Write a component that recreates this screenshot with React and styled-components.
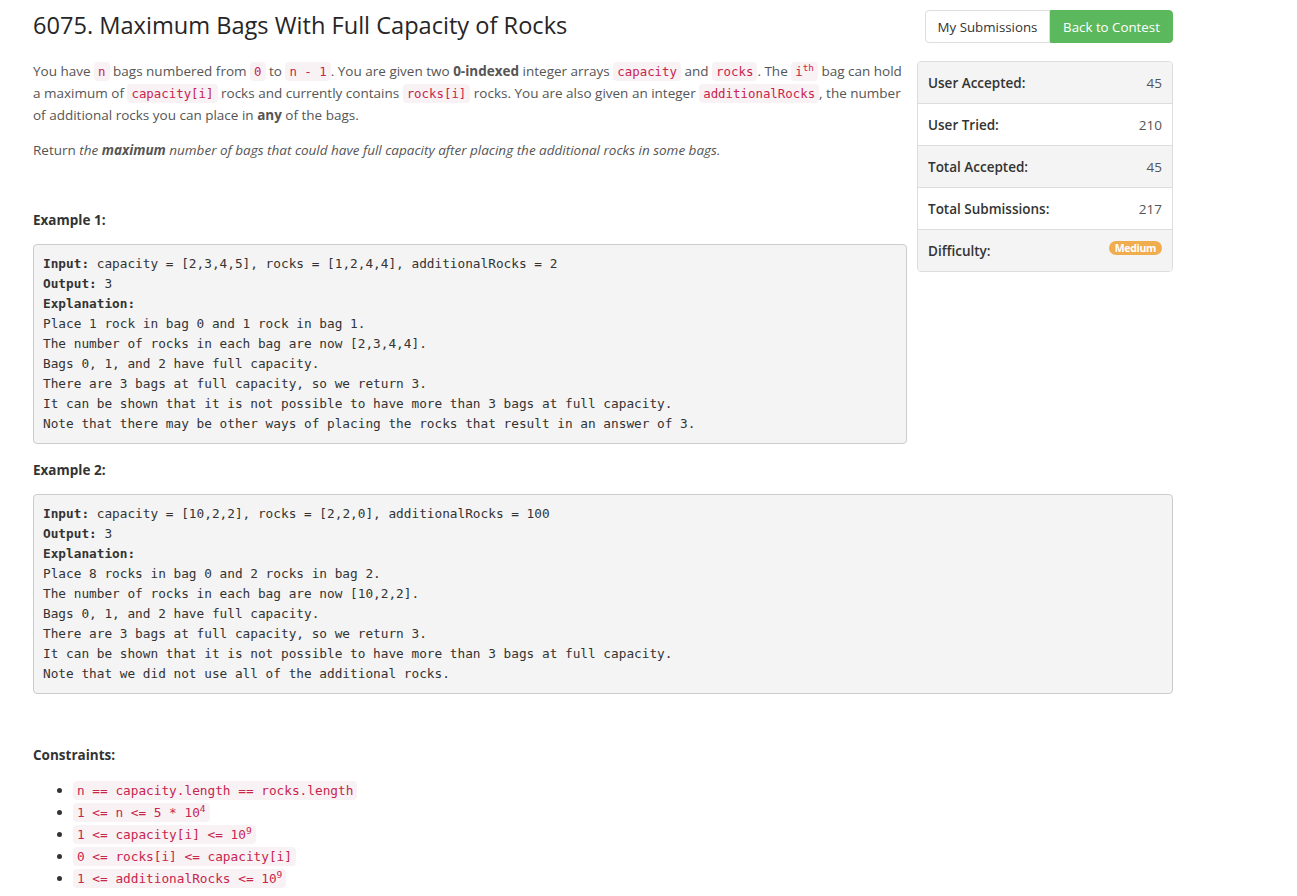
import React from "react";
import styled, { createGlobalStyle } from "styled-components";

const Global = createGlobalStyle`
  html, body { margin: 0; padding: 0; background: #fff; }
  body {
    font-family: "Open Sans", "Noto Sans", sans-serif;
    font-size: 13.5px;
    color: #555;
  }
  * { box-sizing: border-box; }
`;

const Page = styled.div`
  width: 1140px;
  margin-left: 33px;
`;

const Header = styled.div`
  display: flex;
  justify-content: space-between;
  align-items: flex-start;
  height: 54px;
`;

const Title = styled.h3`
  margin: 0;
  padding-top: 10px;
  font-size: 23.6px;
  font-weight: 400;
  color: #262626;
  line-height: 30px;
`;

const ButtonGroup = styled.div`
  display: flex;
  margin-top: 10px;
`;

const Btn = styled.button`
  height: 33px;
  padding: 0 10px;
  font-family: inherit;
  font-size: 13.3px;
  border: 1px solid ${(p) => (p.$primary ? "#5cb85c" : "#ddd")};
  background: ${(p) => (p.$primary ? "#5cb85c" : "#fff")};
  color: ${(p) => (p.$primary ? "#fff" : "#333")};
  border-radius: ${(p) => (p.$primary ? "0 4px 4px 0" : "4px 0 0 4px")};
  width: ${(p) => p.$w}px;
  cursor: pointer;
`;

const Content = styled.div`
  padding-top: 6px;
  &::after { content: ""; display: block; clear: both; }
`;

const Sidebar = styled.div`
  float: right;
  width: 256px;
  margin: 1px 0 10px 10px;
  border: 1px solid #ddd;
  border-radius: 4px;
  overflow: hidden;
`;

const StatRow = styled.div`
  display: flex;
  justify-content: space-between;
  align-items: center;
  height: 41px;
  padding: 0 10px;
  background: ${(p) => (p.$odd ? "#f4f4f4" : "#fff")};
  & + & {
    border-top: 1px solid #ddd;
    height: 42px;
  }
  &:last-child { height: 41px; }
`;

const StatLabel = styled.span`
  font-weight: 600;
  color: #333;
`;

const StatValue = styled.span`
  color: #555;
`;

const Badge = styled.span`
  background: #f0ad4e;
  color: #fff;
  font-weight: 700;
  font-size: 10.5px;
  line-height: 14px;
  padding: 0 6px;
  border-radius: 8px;
  letter-spacing: -0.3px;
  margin-top: -5px;
`;

const Para = styled.p`
  margin: ${(p) => p.$mt || 0}px 0 0 0;
  line-height: 22px;
`;

const Code = styled.code`
  font-family: "DejaVu Sans Mono", "Liberation Mono", monospace;
  font-size: ${(p) => (p.$big ? 12.75 : 12.4)}px;
  line-height: 1;
  color: #c7254e;
  background: #f9f2f4;
  padding: 2px 4px;
  border-radius: 4px;
`;

const Label = styled.div`
  margin-top: ${(p) => p.$mt}px;
  font-weight: 700;
  color: #333;
  line-height: 22px;
`;

const Pre = styled.pre`
  margin: 13px 0 0 0;
  overflow: auto;
  padding: 9px;
  background: #f4f4f4;
  border: 1px solid #ccc;
  border-radius: 4px;
  font-family: "DejaVu Sans Mono", "Liberation Mono", monospace;
  font-size: 12.75px;
  line-height: 20px;
  color: #333;
  white-space: pre;
`;

const List = styled.ul`
  margin: 13px 0 0 0;
  padding-left: 40px;
  line-height: 22px;
  li { color: #333; }
`;

const Sup = styled.sup`
  font-size: 75%;
  line-height: 0;
  vertical-align: super;
`;

const stats = [
  ["User Accepted:", "45"],
  ["User Tried:", "210"],
  ["Total Accepted:", "45"],
  ["Total Submissions:", "217"],
];

export default function App() {
  return (
    <>
      <Global />
      <Page>
        <Header>
          <Title>6075. Maximum Bags With Full Capacity of Rocks</Title>
          <ButtonGroup>
            <Btn $w={125}>My Submissions</Btn>
            <Btn $primary $w={123}>Back to Contest</Btn>
          </ButtonGroup>
        </Header>
        <Content>
          <Sidebar>
            {stats.map(([l, v], i) => (
              <StatRow key={l} $odd={i % 2 === 0}>
                <StatLabel>{l}</StatLabel>
                <StatValue>{v}</StatValue>
              </StatRow>
            ))}
            <StatRow $odd>
              <StatLabel>Difficulty:</StatLabel>
              <Badge>Medium</Badge>
            </StatRow>
          </Sidebar>
          <Para>
            You have <Code>n</Code> bags numbered from <Code>0</Code> to <Code>n - 1</Code>. You are given two{" "}
            <strong>0-indexed</strong> integer arrays <Code>capacity</Code> and <Code>rocks</Code>. The{" "}
            <Code>i<Sup>th</Sup></Code> bag can hold a maximum of <Code>capacity[i]</Code> rocks and currently
            contains <Code>rocks[i]</Code> rocks. You are also given an integer <Code>additionalRocks</Code>, the
            number of additional rocks you can place in <strong>any</strong> of the bags.
          </Para>
          <Para $mt={13}>
            Return <em>the <strong>maximum</strong> number of bags that could have full capacity after placing the additional rocks in some bags.</em>
          </Para>
          <Label $mt={48}>Example 1:</Label>
          <Pre>
            <strong>Input:</strong> capacity = [2,3,4,5], rocks = [1,2,4,4], additionalRocks = 2{"\n"}
            <strong>Output:</strong> 3{"\n"}
            <strong>Explanation:</strong>{"\n"}
            {"Place 1 rock in bag 0 and 1 rock in bag 1.\n"}
            {"The number of rocks in each bag are now [2,3,4,4].\n"}
            {"Bags 0, 1, and 2 have full capacity.\n"}
            {"There are 3 bags at full capacity, so we return 3.\n"}
            {"It can be shown that it is not possible to have more than 3 bags at full capacity.\n"}
            {"Note that there may be other ways of placing the rocks that result in an answer of 3."}
          </Pre>
          <Label $mt={15}>Example 2:</Label>
          <Pre>
            <strong>Input:</strong> capacity = [10,2,2], rocks = [2,2,0], additionalRocks = 100{"\n"}
            <strong>Output:</strong> 3{"\n"}
            <strong>Explanation:</strong>{"\n"}
            {"Place 8 rocks in bag 0 and 2 rocks in bag 2.\n"}
            {"The number of rocks in each bag are now [10,2,2].\n"}
            {"Bags 0, 1, and 2 have full capacity.\n"}
            {"There are 3 bags at full capacity, so we return 3.\n"}
            {"It can be shown that it is not possible to have more than 3 bags at full capacity.\n"}
            {"Note that we did not use all of the additional rocks."}
          </Pre>
          <Label $mt={50}>Constraints:</Label>
          <List>
            <li><Code $big>n == capacity.length == rocks.length</Code></li>
            <li><Code $big>1 &lt;= n &lt;= 5 * 10<Sup>4</Sup></Code></li>
            <li><Code $big>1 &lt;= capacity[i] &lt;= 10<Sup>9</Sup></Code></li>
            <li><Code $big>0 &lt;= rocks[i] &lt;= capacity[i]</Code></li>
            <li><Code $big>1 &lt;= additionalRocks &lt;= 10<Sup>9</Sup></Code></li>
          </List>
        </Content>
      </Page>
    </>
  );
}
